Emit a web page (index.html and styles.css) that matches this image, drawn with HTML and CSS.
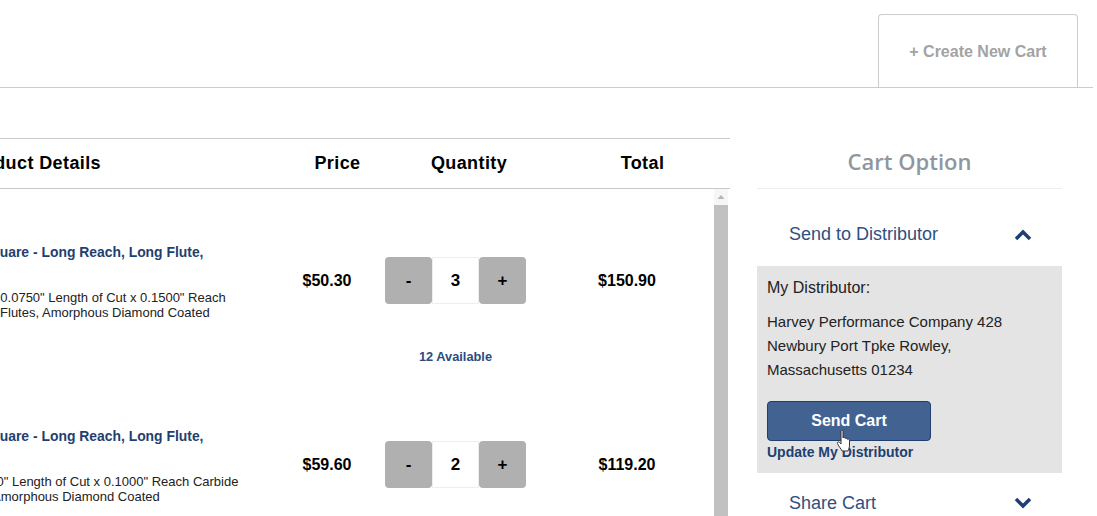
FILE: index.html
```html
<!DOCTYPE html>
<html lang="en">
<head>
<meta charset="utf-8">
<title>Cart</title>
<link rel="stylesheet" href="styles.css">
</head>
<body>
<header class="topbar">
  <div class="new-tab">+ Create New Cart</div>
</header>
<main class="content">
  <section class="table">
    <div class="thead">
      <div class="th th-details">Product Details</div>
      <div class="th th-price">Price</div>
      <div class="th th-qty">Quantity</div>
      <div class="th th-total">Total</div>
    </div>
    <div class="tbody">
      <div class="rows">
        <article class="row">
          <div class="details">
            <div class="title">Square - Long Reach, Long Flute,</div>
            <div class="desc">" x 0.0750" Length of Cut x 0.1500" Reach<br>, 4 Flutes, Amorphous Diamond Coated</div>
          </div>
          <div class="price">$50.30</div>
          <div class="qty-cell">
            <div class="stepper"><span class="step">-</span><span class="count">3</span><span class="step">+</span></div>
            <div class="avail">12 Available</div>
          </div>
          <div class="total">$150.90</div>
        </article>
        <article class="row">
          <div class="details">
            <div class="title">Square - Long Reach, Long Flute,</div>
            <div class="desc">000" Length of Cut x 0.1000" Reach Carbide<br>r, Amorphous Diamond Coated</div>
          </div>
          <div class="price">$59.60</div>
          <div class="qty-cell">
            <div class="stepper"><span class="step">-</span><span class="count">2</span><span class="step">+</span></div>
          </div>
          <div class="total">$119.20</div>
        </article>
      </div>
      <div class="scrollbar">
        <svg class="scroll-arrow" width="14" height="16" viewBox="0 0 14 16"><path d="M7 6 L10.500 10 L3.500 10 Z" fill="#b5b5b5"/></svg>
        <div class="thumb"></div>
      </div>
    </div>
  </section>
  <aside class="options">
    <h2 class="options-title">Cart Option</h2>
    <div class="acc-head acc-head-open">
      <span>Send to Distributor</span>
      <svg class="chev" width="20" height="12" viewBox="0 0 20 12"><path d="M3 10 L10 3 L17 10" fill="none" stroke="#1f3f70" stroke-width="3.500"/></svg>
    </div>
    <div class="acc-body">
      <p class="dist-label">My Distributor:</p>
      <p class="dist-addr">Harvey Performance Company 428 Newbury Port Tpke Rowley, Massachusetts 01234</p>
      <button class="send">Send Cart</button>
      <a class="update">Update My Distributor</a>
      <svg class="hand" width="16" height="24" viewBox="0 0 16 24"><path d="M5 2 C5 .8 7 .8 7 2 V9 C7.500 8 9 8 9.200 9.500 C9.800 8.700 11.200 9 11.300 10.300 C12 9.600 13.500 10 13.500 11.500 V16 C13.500 19 12.500 20 12 22 H6 C5 19.500 3 18 1.500 14.500 C1 13 2.500 12.300 3.500 13.500 L5 15 Z" fill="#fff" stroke="#333" stroke-width="1"/></svg>
    </div>
    <div class="acc-head acc-head-closed">
      <span>Share Cart</span>
      <svg class="chev" width="20" height="12" viewBox="0 0 20 12"><path d="M3 2 L10 9 L17 2" fill="none" stroke="#1f3f70" stroke-width="3.500"/></svg>
    </div>
  </aside>
</main>
</body>
</html>
```
FILE: styles.css
```css
html, body { margin: 0; padding: 0; height: 100%; overflow: hidden; background: #fff; }
body { width: 1097px; height: 516px; font-family: "Liberation Sans", Arial, sans-serif; color: #000; }
.topbar { height: 87px; width: 1078px; border-bottom: 1px solid #ccc; display: flex; justify-content: flex-end; align-items: flex-end; padding-right: 15px; }
.new-tab { width: 198px; height: 70px; padding-top: 2px; border: 1px solid #ccc; border-bottom: 0; border-radius: 4px 4px 0 0; display: flex; align-items: center; justify-content: center; color: #a3a3a3; font-weight: 700; font-size: 16px; }
.content { display: flex; align-items: flex-start; margin-top: 50px; margin-left: -42px; }
.table { width: 772px; flex: none; }
.thead { display: flex; height: 49px; align-items: center; border-top: 1px solid #c9c9c9; border-bottom: 1px solid #c9c9c9; font-weight: 700; font-size: 18px; letter-spacing: .4px; }
.th-details { width: 329px; padding-left: 5px; flex: none; white-space: nowrap; }
.th-price { width: 91px; flex: none; text-align: center; }
.th-qty { width: 172px; flex: none; text-align: center; }
.th-total { width: 175px; flex: none; text-align: center; }
.tbody { display: flex; height: 328px; overflow: hidden; }
.rows { flex: 1; min-width: 0; }
.row { display: flex; height: 184px; }
.details { width: 321px; flex: none; padding-left: 24px; box-sizing: border-box; white-space: nowrap; padding-top: 55px; }
.title { color: #1f3f70; font-weight: 700; font-size: 13.900px; line-height: 16px; }
.desc { color: #222; font-size: 13px; line-height: 15px; margin-top: 30px; }
.price { width: 96px; flex: none; font-weight: 700; font-size: 16px; text-align: center; padding-top: 83px; line-height: 18px; box-sizing: border-box; }
.qty-cell { width: 161px; flex: none; display: flex; flex-direction: column; align-items: center; padding-top: 68px; box-sizing: border-box; }
.stepper { display: flex; height: 47px; }
.step { width: 47px; height: 47px; background: #b0b0b0; border-radius: 4px; display: flex; align-items: center; justify-content: center; font-weight: 700; font-size: 17px; }
.count { width: 45px; height: 45px; border: 1px solid #eee; display: flex; align-items: center; justify-content: center; font-weight: 700; font-size: 17px; }
.avail { color: #2b4c80; font-weight: 700; font-size: 12.800px; margin-top: 45px; line-height: 16px; }
.total { width: 164px; flex: none; padding-left: 18px; font-weight: 700; font-size: 16px; text-align: center; padding-top: 83px; line-height: 18px; box-sizing: border-box; }
.scrollbar { width: 14px; margin-right: 2px; flex: none; display: flex; flex-direction: column; background: #f6f6f6; }
.scroll-arrow { display: block; }
.thumb { flex: 1; background: #c1c1c1; }
.options { width: 305px; flex: none; margin-left: 27px; }
.options-title { margin: 0; height: 51px; border-bottom: 1px solid #eee; box-sizing: border-box; font-family: "Open Sans", sans-serif; font-weight: 600; font-size: 22px; color: #8f979e; text-align: center; line-height: 46px; }
.acc-head { display: flex; align-items: center; justify-content: space-between; height: 77px; padding: 0 29px 0 32px; box-sizing: border-box; color: #2f4f7f; font-size: 18px; }
.acc-head-open { padding-top: 14px; }
.chev { display: block; }
.acc-body { position: relative; background: #e4e4e4; height: 207px; padding: 12px 10px 0; box-sizing: border-box; font-size: 15px; color: #222; }
.dist-label { margin: 0; line-height: 20px; font-size: 16px; }
.dist-addr { margin: 12px 0 0; line-height: 24px; width: 260px; }
.send { display: block; width: 164px; height: 40px; margin-top: 19px; background: #426391; border: 1px solid #1f3f70; border-radius: 4px; color: #fff; font: 700 16px "Liberation Sans", Arial, sans-serif; }
.update { display: block; color: #1f3f70; font-weight: 700; font-size: 14px; line-height: 18px; margin-top: 2px; }
.hand { position: absolute; left: 79px; top: 163px; }
.acc-head-closed { height: 60px; }
```
